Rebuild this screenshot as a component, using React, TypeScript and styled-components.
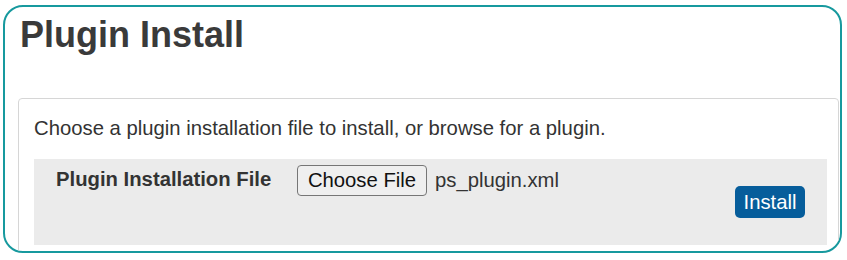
import styled, { createGlobalStyle } from "styled-components";

const GlobalStyle = createGlobalStyle`
  body {
    margin: 0;
    background: #ffffff;
    font-family: "Liberation Sans", Arial, sans-serif;
  }
`;

// teal rounded frame around the whole card
const Frame = styled.div`
  box-sizing: border-box;
  margin: 5px 0 0 3px;
  width: 839px;
  height: 248px;
  border: 2px solid #17999e;
  border-radius: 20px;
  overflow: hidden;
  background: #fff;
`;

const Title = styled.h1`
  margin: 10px 0 0 15px;
  font-size: 36px;
  line-height: 1;
  font-weight: 700;
  color: #3a3a3a;
`;

const Panel = styled.section`
  box-sizing: border-box;
  margin: 45px 1px 0 13px;
  height: 200px;
  border: 1px solid #d6d6d6;
  border-radius: 4px;
  padding: 18px 11px 0 15px;
`;

const Intro = styled.p`
  margin: 0 0 19px;
  font-size: 20.3px;
  line-height: 23px;
  color: #333;
`;

const FieldRow = styled.div`
  display: flex;
  align-items: flex-start;
  height: 86px;
  box-sizing: border-box;
  padding: 6px 22px 0 22px;
  background: #ebebeb;
`;

const FieldLabel = styled.label`
  width: 241px;
  margin-top: 3px;
  font-size: 20.3px;
  line-height: 23px;
  font-weight: 700;
  color: #333;
`;

const FilePicker = styled.div`
  display: flex;
  align-items: center;
  gap: 8px;
`;

const ChooseButton = styled.button`
  box-sizing: border-box;
  height: 31px;
  width: 130px;
  padding: 0;
  border: 1px solid #767676;
  border-radius: 4px;
  background: #efefef;
  font-family: "Liberation Sans", Arial, sans-serif;
  font-size: 20.3px;
  color: #111;
`;

const FileName = styled.span`
  font-size: 20.3px;
  color: #333;
`;

const InstallButton = styled.button`
  box-sizing: border-box;
  margin: 21px 0 0 auto;
  width: 70px;
  height: 32px;
  padding: 0;
  border: none;
  border-radius: 5px;
  background: #065d9b;
  color: #fff;
  font-family: "Liberation Sans", Arial, sans-serif;
  font-size: 20.3px;
`;

export default function App() {
  return (
    <>
      <GlobalStyle />
      <Frame>
        <Title>Plugin Install</Title>
        <Panel>
          <Intro>
            Choose a plugin installation file to install, or browse for a
            plugin.
          </Intro>
          <FieldRow>
            <FieldLabel>Plugin Installation File</FieldLabel>
            <FilePicker>
              <ChooseButton type="button">Choose File</ChooseButton>
              <FileName>ps_plugin.xml</FileName>
            </FilePicker>
            <InstallButton type="button">Install</InstallButton>
          </FieldRow>
        </Panel>
      </Frame>
    </>
  );
}
